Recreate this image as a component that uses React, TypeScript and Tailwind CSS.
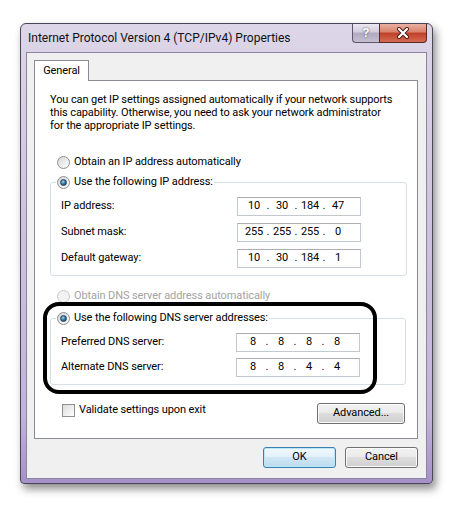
import { Fragment } from "react"

function Radio({ checked = false, disabled = false }: { checked?: boolean; disabled?: boolean }) {
  return (
    <span
      className={
        "flex h-[13px] w-[13px] shrink-0 items-center justify-center rounded-full border " +
        (disabled
          ? "border-[#c8c8c8] bg-[#f2f2f2]"
          : "border-[#8e8f8f] bg-gradient-to-br from-[#d6d6d6] to-white")
      }
    >
      {checked && (
        <span className="h-[7px] w-[7px] rounded-full border border-[#2a3f55] bg-[radial-gradient(circle_at_40%_35%,#9fd6f2,#2a6d9c_55%,#0f3558)]" />
      )}
    </span>
  )
}

function IpBox({ value }: { value: string[] }) {
  return (
    <div className="flex h-[19px] w-[124px] items-center border border-[#c3c7cf] border-t-[#abadb3] bg-white pl-[5px]">
      {value.map((octet, i) => (
        <Fragment key={i}>
          <span className="w-[22px] text-center">{octet}</span>
          {i < 3 && <span className="w-[6px] text-center">.</span>}
        </Fragment>
      ))}
    </div>
  )
}

function FieldRow({ label, value }: { label: string; value: string[] }) {
  return (
    <div className="flex items-center pr-[45px] pl-[10px]">
      <span className="flex-1">{label}</span>
      <IpBox value={value} />
    </div>
  )
}

function WinButton({ children, primary = false, width }: { children: string; primary?: boolean; width: string }) {
  return (
    <button
      className={
        "h-[21px] rounded-[3px] border text-center " +
        width +
        (primary
          ? " border-[#3c7fb1] bg-[linear-gradient(#f1f8fd_0%,#e3f1fa_45%,#cfe6f4_50%,#bcdcef_100%)] shadow-[inset_0_0_0_1px_#b9e6f9]"
          : " border-[#707070] bg-[linear-gradient(#f2f2f2_0%,#ebebeb_45%,#dddddd_50%,#cfcfcf_100%)] shadow-[inset_0_0_0_1px_#fbfbfb]")
      }
    >
      {children}
    </button>
  )
}

export default function App() {
  return (
    <div className="h-[508px] w-[453px] bg-white pt-[23px] pl-[20px] font-['Roboto',sans-serif] text-[11px] tracking-[-0.1px] text-black">
      {/* Window frame */}
      <div className="w-[413px] rounded-t-[6px] rounded-b-[4px] border border-[#4c4459] bg-[linear-gradient(#ddd6e8_0%,#cfc4df_40%,#c2b4da_85%,#a591c9_100%)] px-[5px] pb-[4px] shadow-[3px_5px_8px_rgba(0,0,0,0.45)]">
        {/* Title bar */}
        <div className="flex h-[28px] items-start">
          <span className="flex-1 pt-[6px] pl-[2px] text-[12px] leading-[16px] tracking-normal text-[#111]">
            Internet Protocol Version 4 (TCP/IPv4) Properties
          </span>
          <div className="flex h-[19px]">
            <div className="flex w-[27px] items-center justify-center rounded-bl-[4px] border border-t-0 border-r-0 border-[#5d566c] bg-[linear-gradient(#ece8f1_0%,#d3cddc_45%,#b2a9c2_50%,#c6bfd2_100%)] text-[13px] font-bold text-white [text-shadow:0_0_2px_#3a3446]">
              ?
            </div>
            <div className="flex w-[48px] items-center justify-center rounded-br-[4px] border border-t-0 border-[#5a2a22] bg-[linear-gradient(#eab0a2_0%,#d9826c_45%,#c0402a_50%,#d46b52_100%)]">
              <svg width="14" height="12" viewBox="0 0 14 12">
                <path d="M3 2 L11 10 M11 2 L3 10" stroke="#4a1a12" strokeWidth="4" strokeLinecap="round" />
                <path d="M3 2 L11 10 M11 2 L3 10" stroke="#fff" strokeWidth="2.2" strokeLinecap="round" />
              </svg>
            </div>
          </div>
        </div>

        {/* Client area */}
        <div className="border border-[#8d83a0] bg-[#f0f0f0] pt-[7px] pr-[8px] pb-[10px] pl-[7px]">
          <div className="relative z-10 -mb-px flex h-[21px] w-[55px] items-center justify-center border border-b-0 border-[#898c95] bg-white">
            General
          </div>

          {/* Tab panel */}
          <div className="relative border border-[#898c95] bg-white pt-[12px] pr-[10px] pb-[14px] pl-[15px]">
            <p className="leading-[13px]">
              You can get IP settings assigned automatically if your network supports
              <br />
              this capability. Otherwise, you need to ask your network administrator
              <br />
              for the appropriate IP settings.
            </p>

            <div className="mt-[22px] flex h-[16px] items-center gap-[4px] pl-[7px]">
              <Radio />
              <span>Obtain an IP address automatically</span>
            </div>

            <fieldset className="mt-[4px] rounded-[3px] border border-[#d5dfe5]">
              <legend className="ml-[5px] flex h-[16px] items-center gap-[4px] px-px">
                <Radio checked />
                <span>Use the following IP address:</span>
              </legend>
              <div className="flex flex-col gap-[7px] pt-[7px] pb-[7px]">
                <FieldRow label="IP address:" value={["10", "30", "184", "47"]} />
                <FieldRow label="Subnet mask:" value={["255", "255", "255", "0"]} />
                <FieldRow label="Default gateway:" value={["10", "30", "184", "1"]} />
              </div>
            </fieldset>

            <div className="mt-[12px] flex h-[16px] items-center gap-[4px] pl-[7px] text-[#a3a3a3]">
              <Radio disabled />
              <span>Obtain DNS server address automatically</span>
            </div>

            <fieldset className="mt-[6px] mr-px rounded-[3px] border border-[#d5dfe5]">
              <legend className="ml-[5px] flex h-[16px] items-center gap-[4px] px-px">
                <Radio checked />
                <span>Use the following DNS server addresses:</span>
              </legend>
              <div className="flex flex-col gap-[6px] pt-[7px] pb-[7px]">
                <FieldRow label="Preferred DNS server:" value={["8", "8", "8", "8"]} />
                <FieldRow label="Alternate DNS server:" value={["8", "8", "4", "4"]} />
              </div>
            </fieldset>

            <div className="mt-[18px] flex items-start justify-between pr-[2px]">
              <label className="mt-px flex h-[13px] items-center gap-[4px] pl-[12px]">
                <span className="h-[13px] w-[13px] border border-[#8e8f8f] bg-gradient-to-br from-[#dcdcdc] to-white" />
                <span>Validate settings upon exit</span>
              </label>
              <WinButton width="w-[88px]">Advanced...</WinButton>
            </div>

            {/* Annotation drawn over the DNS section */}
            <div className="pointer-events-none absolute top-[221px] left-[8px] h-[92px] w-[334px] rounded-[16px] border-4 border-black" />
          </div>

          <div className="mt-[8px] flex justify-end gap-[9px]">
            <WinButton primary width="w-[73px]">OK</WinButton>
            <WinButton width="w-[73px]">Cancel</WinButton>
          </div>
        </div>
      </div>
    </div>
  )
}
